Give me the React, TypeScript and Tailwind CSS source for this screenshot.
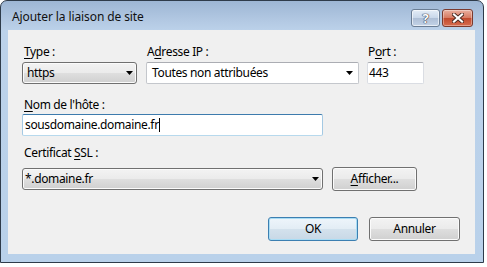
import React from "react";

function Arrow() {
  return (
    <svg width="7" height="4" viewBox="0 0 7 4" className="shrink-0">
      <path d="M0 0h7L3.5 4z" fill="#000" />
    </svg>
  );
}

function Label({ u, before = "", after }: { u: string; before?: string; after: string }) {
  return (
    <div className="h-4 leading-4 whitespace-nowrap">
      {before}
      <span className="underline underline-offset-[2px] decoration-1">{u}</span>
      {after}
    </div>
  );
}

const btnBg =
  "bg-[linear-gradient(180deg,#f3f3f3_0%,#ebebeb_48%,#dedede_52%,#d0d0d0_100%)]";

export default function App() {
  return (
    <div className="w-[487px] h-[267px] bg-white font-['Noto_Sans',sans-serif] text-[12px] text-black">
      <div className="w-[484px] h-[263px] rounded-t-[7px] border border-[#2e3b4a] bg-[linear-gradient(180deg,#9db6d4_0px,#b3c9e3_20px,#bcd2ea_30px,#b9d1ea_100%)] flex flex-col">
        {/* title bar */}
        <div className="h-[29px] flex items-start">
          <div className="ml-[11px] mt-[8px] leading-4 text-[#111] tracking-[-0.1px]">Ajouter la liaison de site</div>
          <div className="ml-auto mt-[8px] mr-[10px] flex gap-[2px]">
            <div className="w-[29px] h-[18px] rounded-[3px] border border-[#6a7d94] bg-[linear-gradient(180deg,#e4edf7_0%,#c9d8ea_48%,#aebfd6_52%,#c3d3e7_100%)] shadow-[inset_0_0_0_1px_rgba(255,255,255,0.6)] flex items-center justify-center">
              <span className="text-white font-bold text-[13px] leading-none [text-shadow:0_0_1px_#334,0_0_1px_#334,0_0_1px_#334]">?</span>
            </div>
            <div className="w-[31px] h-[18px] rounded-[3px] border border-[#7b3a2e] bg-[linear-gradient(180deg,#eab0a0_0%,#d77b63_48%,#c14a2e_52%,#d76c4f_100%)] shadow-[inset_0_0_0_1px_rgba(255,255,255,0.35)] flex items-center justify-center">
              <svg width="12" height="10" viewBox="0 0 12 10">
                <path d="M2 1.5L10 8.5M10 1.5L2 8.5" stroke="#4a2a22" strokeWidth="4" strokeLinecap="square" />
                <path d="M2 1.5L10 8.5M10 1.5L2 8.5" stroke="#fff" strokeWidth="2.2" strokeLinecap="square" />
              </svg>
            </div>
          </div>
        </div>

        {/* client area */}
        <div className="ml-[7px] w-[467px] h-[224px] bg-[#f0f0f0] flex flex-col tracking-[-0.35px]">
          {/* row 1 */}
          <div className="mt-[14px] flex">
            <div className="ml-[14px] w-[115px] flex flex-col gap-[2px]">
              <div className="pl-[2px]">
                <Label u="T" after="ype :" />
              </div>
              <div className={`h-[22px] rounded-[3px] border border-[#707070] ${btnBg} shadow-[inset_0_0_0_1px_#fbfbfb] flex items-center pl-[4px] pr-[3px]`}>
                <span className="flex-1 leading-[20px]">https</span>
                <Arrow />
              </div>
            </div>
            <div className="ml-[9px] w-[213px] flex flex-col gap-[2px]">
              <div className="pl-[1px]">
                <Label before="A" u="d" after="resse IP :" />
              </div>
              <div className="h-[22px] rounded-[2px] border border-[#c4c7cc] border-t-[#abadb3] bg-white flex items-center pl-[5px] pr-[5px]">
                <span className="flex-1 leading-[20px]">Toutes non attribuées</span>
                <Arrow />
              </div>
            </div>
            <div className="ml-[8px] w-[57px] flex flex-col gap-[2px]">
              <div className="pl-[1px]">
                <Label before="P" u="o" after="rt :" />
              </div>
              <div className="h-[22px] rounded-[2px] border border-[#dadde3] border-t-[#abadb3] bg-white flex items-center pl-[1px]">
                <span className="leading-[20px]">443</span>
              </div>
            </div>
          </div>

          {/* row 2 */}
          <div className="ml-[14px] mt-[13px] w-[301px] flex flex-col gap-[1px]">
            <div className="pl-[2px]">
              <Label u="N" after="om de l'hôte :" />
            </div>
            <div className="h-[22px] rounded-[2px] border border-[#a4c9e3] border-t-[#3d7bad] border-b-[#b7d9ed] bg-white flex items-center pl-[2px]">
              <span className="leading-[20px]">sousdomaine.domaine.fr</span>
              <span className="w-px h-[14px] bg-black" />
            </div>
          </div>

          {/* row 3 */}
          <div className="ml-[14px] mt-[9px] flex flex-col gap-[6px]">
            <div className="pl-[2px]">
              <Label before="Certificat " u="S" after="SL :" />
            </div>
            <div className="flex items-center">
              <div className={`w-[301px] h-[22px] rounded-[3px] border border-[#707070] ${btnBg} shadow-[inset_0_0_0_1px_#fbfbfb] flex items-center pl-[2px] pr-[3px]`}>
                <span className="flex-1 leading-[20px]">*.domaine.fr</span>
                <Arrow />
              </div>
              <div className={`ml-[9px] w-[85px] h-[24px] rounded-[3px] border border-[#707070] ${btnBg} shadow-[inset_0_0_0_1px_#fbfbfb] flex items-center justify-center`}>
                <span>
                  <span className="underline underline-offset-[2px] decoration-1">A</span>fficher...
                </span>
              </div>
            </div>
          </div>

          {/* buttons */}
          <div className="mt-[26px] ml-[260px] flex gap-[11px]">
            <div className="w-[90px] h-[24px] rounded-[3px] border border-[#3c7fb1] bg-[linear-gradient(180deg,#eef5fb_0%,#e3edf5_48%,#d3e1ec_52%,#c8d8e6_100%)] shadow-[inset_0_0_0_1px_#a8dcf4] flex items-center justify-center">
              OK
            </div>
            <div className={`w-[91px] h-[24px] rounded-[3px] border border-[#707070] ${btnBg} shadow-[inset_0_0_0_1px_#fbfbfb] flex items-center justify-center`}>
              Annuler
            </div>
          </div>
        </div>
      </div>
    </div>
  );
}
